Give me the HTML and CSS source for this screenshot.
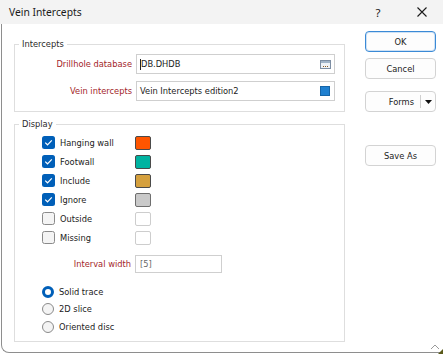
FILE: index.html
```html
<!DOCTYPE html>
<html>
<head>
<meta charset="utf-8">
<link rel="stylesheet" href="styles.css">
</head>
<body>
<div class="window">
  <div class="titlebar">
    <span class="title">Vein Intercepts</span>
    <span class="help">?</span>
    <span class="close"><svg width="10" height="10" viewBox="0 0 10 10"><path d="M0.5 0.5 L9.5 9.5 M9.5 0.5 L0.5 9.5" stroke="#1a1a1a" stroke-width="1.1" fill="none"/></svg></span>
  </div>
  <div class="client">
    <div class="main">
      <fieldset class="group intercepts">
        <legend>Intercepts</legend>
        <div class="group-body">
          <div class="field-row">
            <span class="req">Drillhole database</span>
            <div class="input wide"><span class="caret"></span><span class="val">DB.DHDB</span>
              <svg class="browse" width="11" height="9" viewBox="0 0 11 9"><rect x="0.5" y="0.5" width="10" height="8" fill="#eef2f7" stroke="#7d8ea3"/><rect x="1" y="1" width="9" height="2" fill="#9fb3c8"/><rect x="3" y="6" width="1" height="1" fill="#8a5a20"/><rect x="5" y="6" width="1" height="1" fill="#8a5a20"/><rect x="7" y="6" width="1" height="1" fill="#8a5a20"/></svg>
            </div>
          </div>
          <div class="field-row">
            <span class="req">Vein intercepts</span>
            <div class="input wide"><span class="val">Vein Intercepts edition2</span><span class="bluesq"></span></div>
          </div>
        </div>
      </fieldset>
      <fieldset class="group display">
        <legend>Display</legend>
        <div class="group-body display-body">
          <div class="check-row"><span class="cb on"><svg width="13" height="13" viewBox="0 0 13 13"><polyline points="3.2,6.6 5.5,8.8 9.8,4.3" fill="none" stroke="#fff" stroke-width="1.2"/></svg></span><span class="cb-label">Hanging wall</span><span class="swatch sw-orange"></span></div>
          <div class="check-row"><span class="cb on"><svg width="13" height="13" viewBox="0 0 13 13"><polyline points="3.2,6.6 5.5,8.8 9.8,4.3" fill="none" stroke="#fff" stroke-width="1.2"/></svg></span><span class="cb-label">Footwall</span><span class="swatch sw-teal"></span></div>
          <div class="check-row"><span class="cb on"><svg width="13" height="13" viewBox="0 0 13 13"><polyline points="3.2,6.6 5.5,8.8 9.8,4.3" fill="none" stroke="#fff" stroke-width="1.2"/></svg></span><span class="cb-label">Include</span><span class="swatch sw-gold"></span></div>
          <div class="check-row"><span class="cb on"><svg width="13" height="13" viewBox="0 0 13 13"><polyline points="3.2,6.6 5.5,8.8 9.8,4.3" fill="none" stroke="#fff" stroke-width="1.2"/></svg></span><span class="cb-label">Ignore</span><span class="swatch sw-gray"></span></div>
          <div class="check-row"><span class="cb"></span><span class="cb-label">Outside</span><span class="swatch sw-empty"></span></div>
          <div class="check-row"><span class="cb"></span><span class="cb-label">Missing</span><span class="swatch sw-empty"></span></div>
          <div class="interval-row">
            <span class="req interval-label">Interval width</span>
            <div class="input short"><span class="val hint">[5]</span></div>
          </div>
          <div class="radios">
            <div class="radio-row"><span class="rb on"></span><span>Solid trace</span></div>
            <div class="radio-row"><span class="rb"></span><span>2D slice</span></div>
            <div class="radio-row"><span class="rb"></span><span>Oriented disc</span></div>
          </div>
        </div>
      </fieldset>
    </div>
    <div class="buttons">
      <div class="btn primary">OK</div>
      <div class="btn cancel">Cancel</div>
      <div class="btn forms"><span>Forms</span><span class="divider"></span><svg width="7" height="4" viewBox="0 0 7 4"><path d="M0 0 L7 0 L3.5 4 Z" fill="#111"/></svg></div>
      <div class="btn saveas">Save As</div>
    </div>
  </div>
  <svg class="grip" width="13" height="11" viewBox="0 0 13 11"><polyline points="1,6 5,2 9,6" fill="none" stroke="#9a9a9a" stroke-width="1"/><path d="M13 6 L13 11 L8 11 Z" fill="#5a5a1a"/></svg>
</div>
</body>
</html>
```

FILE: styles.css
```css
* { box-sizing: border-box; }
html, body { margin: 0; padding: 0; background: #ffffff; }
body {
  width: 443px;
  height: 354px;
  overflow: hidden;
  font-family: "DejaVu Sans", sans-serif;
  font-size: 8.3px;
  color: #1c1c1c;
}
.window {
  position: relative;
  width: 443px;
  height: 354px;
  display: flex;
  flex-direction: column;
}
.titlebar {
  height: 24px;
  flex: none;
  background: #f3f3f3;
  display: flex;
  align-items: center;
  font-family: "Noto Sans", sans-serif;
  font-size: 10.3px;
  color: #1a1a1a;
}
.title { flex: 1; padding-left: 9px; }
.help {
  width: 20px;
  text-align: center;
  font-size: 11.5px;
  margin-right: 24px;
}
.close {
  width: 20px;
  height: 10px;
  display: flex;
  justify-content: center;
  margin-right: 11px;
}
.client {
  height: 329px;
  flex: none;
  margin-left: 1px;
  border-left: 1px solid #8e8e8e;
  border-bottom: 1px solid #8e8e8e;
  border-bottom-left-radius: 8px;
  display: flex;
  padding-left: 12px;
  background: #ffffff;
}
.main {
  width: 331px;
  flex: none;
  padding-top: 15px;
}
fieldset.group {
  margin: 0;
  padding: 0;
  min-width: 0;
  border: 1px solid #dedede;
}
fieldset.group legend {
  margin-left: 4px;
  padding: 0 3px;
  line-height: 10px;
  color: #2a2a2a;
}
fieldset.group.display { margin-top: 7px; }
.group-body { padding: 5px 0 10px 0; }
.field-row {
  display: flex;
  align-items: center;
  height: 20px;
}
.field-row + .field-row { margin-top: 7px; }
.req { color: #a3262a; }
.field-row .req {
  width: 117px;
  text-align: right;
  margin-right: 4px;
}
.input {
  border: 1px solid #cfcfcf;
  background: #fff;
  display: flex;
  align-items: center;
  padding-left: 3px;
  position: relative;
}
.input.wide {
  width: 199px;
  height: 20px;
}
.val { flex: 1; color: #1c1c1c; }
.hint { color: #6a6a6a; }
.caret {
  width: 1px;
  height: 11px;
  background: #222;
}
.browse { margin-right: 3px; }
.bluesq {
  width: 10px;
  height: 10px;
  background: #1f80d0;
  border: 1px solid #1565a8;
  margin-right: 4px;
}
.group-body.display-body {
  padding: 4px 0 5px 27px;
}
.check-row {
  display: flex;
  align-items: center;
  height: 19px;
}
.cb {
  width: 13px;
  height: 13px;
  border-radius: 2.5px;
  border: 1px solid #8a8a8a;
  background: #f4f4f4;
  margin-right: 5px;
  flex: none;
  display: flex;
}
.cb.on {
  border: none;
  background: #005fb8;
}
.cb-label { width: 75px; }
.swatch {
  width: 16px;
  height: 14px;
  border-radius: 2px;
  border: 1px solid #4a4a4a;
}
.sw-orange { background: #ff5500; }
.sw-teal { background: #00b3a1; }
.sw-gold { background: #d5a03d; }
.sw-gray { background: #c9c9c9; border-color: #6e6e6e; }
.sw-empty { background: #ffffff; border-color: #cdcdcd; }
.interval-row {
  display: flex;
  align-items: center;
  height: 18px;
  margin-top: 8px;
}
.interval-label {
  width: 89px;
  text-align: right;
  margin-right: 4px;
}
.input.short {
  width: 87px;
  height: 18px;
  padding-left: 4px;
}
.radios { margin-top: 10px; }
.radio-row {
  display: flex;
  align-items: center;
  height: 17.5px;
}
.rb {
  width: 12px;
  height: 12px;
  border-radius: 50%;
  border: 1px solid #8a8a8a;
  background: #f4f4f4;
  margin-right: 5px;
  flex: none;
}
.rb.on {
  border: 3.5px solid #005fb8;
  background: #ffffff;
}
.buttons {
  width: 71px;
  flex: none;
  margin-left: 20px;
  padding-top: 7px;
  display: flex;
  flex-direction: column;
}
.btn {
  height: 21px;
  border: 1px solid #d3d3d3;
  border-radius: 4px;
  background: #fdfdfd;
  display: flex;
  align-items: center;
  justify-content: center;
  color: #1c1c1c;
}
.btn.primary { border-color: #3b8ad6; box-shadow: inset 0 0 0 1px #cfe2f5; }
.btn.cancel { margin-top: 6px; }
.btn.forms {
  margin-top: 12px;
  justify-content: flex-end;
  padding-right: 3px;
}
.divider {
  width: 1px;
  height: 13px;
  background: #cfcfcf;
  margin: 0 4px 0 6px;
}
.btn.saveas { margin-top: 33px; }
.grip {
  position: absolute;
  right: 0;
  bottom: 0;
}
```
